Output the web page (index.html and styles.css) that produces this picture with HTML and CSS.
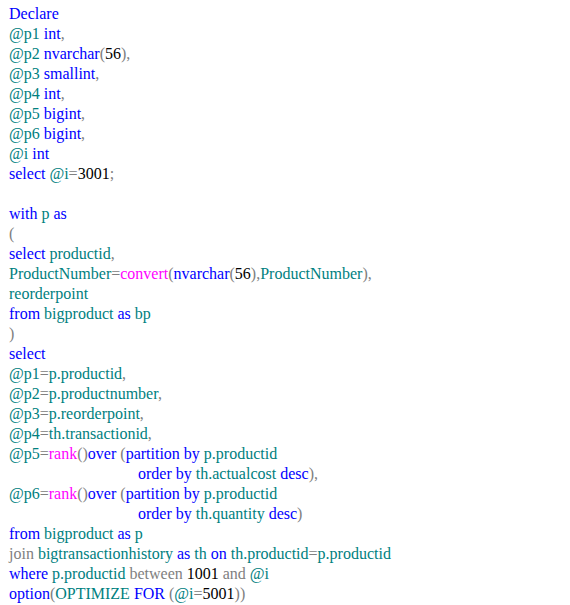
FILE: index.html
```html
<!DOCTYPE html>
<html>
<head>
<meta charset="utf-8">
<link rel="stylesheet" href="styles.css">
</head>
<body>
<div class="code">
<div class="ln"><span class="k">Declare</span></div>
<div class="ln"><span class="v">@p1</span> <span class="k">int</span><span class="g">,</span></div>
<div class="ln"><span class="v">@p2</span> <span class="k">nvarchar</span><span class="g">(</span><span class="n">56</span><span class="g">),</span></div>
<div class="ln"><span class="v">@p3</span> <span class="k">smallint</span><span class="g">,</span></div>
<div class="ln"><span class="v">@p4</span> <span class="k">int</span><span class="g">,</span></div>
<div class="ln"><span class="v">@p5</span> <span class="k">bigint</span><span class="g">,</span></div>
<div class="ln"><span class="v">@p6</span> <span class="k">bigint</span><span class="g">,</span></div>
<div class="ln"><span class="v">@i</span> <span class="k">int</span></div>
<div class="ln"><span class="k">select</span> <span class="v">@i</span><span class="g">=</span><span class="n">3001</span><span class="g">;</span></div>
<div class="ln">&nbsp;</div>
<div class="ln"><span class="k">with</span> <span class="v">p</span> <span class="k">as</span></div>
<div class="ln"><span class="g">(</span></div>
<div class="ln"><span class="k">select</span> <span class="v">productid</span><span class="g">,</span></div>
<div class="ln"><span class="v">ProductNumber</span><span class="g">=</span><span class="f">convert</span><span class="g">(</span><span class="k">nvarchar</span><span class="g">(</span><span class="n">56</span><span class="g">),</span><span class="v">ProductNumber</span><span class="g">),</span></div>
<div class="ln"><span class="v">reorderpoint</span></div>
<div class="ln"><span class="k">from</span> <span class="v">bigproduct</span> <span class="k">as</span> <span class="v">bp</span></div>
<div class="ln"><span class="g">)</span></div>
<div class="ln"><span class="k">select</span></div>
<div class="ln"><span class="v">@p1</span><span class="g">=</span><span class="v">p.productid</span><span class="g">,</span></div>
<div class="ln"><span class="v">@p2</span><span class="g">=</span><span class="v">p.productnumber</span><span class="g">,</span></div>
<div class="ln"><span class="v">@p3</span><span class="g">=</span><span class="v">p.reorderpoint</span><span class="g">,</span></div>
<div class="ln"><span class="v">@p4</span><span class="g">=</span><span class="v">th.transactionid</span><span class="g">,</span></div>
<div class="ln"><span class="v">@p5</span><span class="g">=</span><span class="f">rank</span><span class="g">()</span><span class="k">over</span> <span class="g">(</span><span class="k">partition by</span> <span class="v">p.productid</span></div>
<div class="ln ind"><span class="k">order by</span> <span class="v">th.actualcost</span> <span class="k">desc</span><span class="g">),</span></div>
<div class="ln"><span class="v">@p6</span><span class="g">=</span><span class="f">rank</span><span class="g">()</span><span class="k">over</span> <span class="g">(</span><span class="k">partition by</span> <span class="v">p.productid</span></div>
<div class="ln ind"><span class="k">order by</span> <span class="v">th.quantity</span> <span class="k">desc</span><span class="g">)</span></div>
<div class="ln"><span class="k">from</span> <span class="v">bigproduct</span> <span class="k">as</span> <span class="v">p</span></div>
<div class="ln"><span class="g">join</span> <span class="v">bigtransactionhistory</span> <span class="k">as</span> <span class="v">th</span> <span class="k">on</span> <span class="v">th.productid</span><span class="g">=</span><span class="v">p.productid</span></div>
<div class="ln"><span class="k">where</span> <span class="v">p.productid</span> <span class="g">between</span> <span class="n">1001</span> <span class="g">and</span> <span class="v">@i</span></div>
<div class="ln"><span class="k">option</span><span class="g">(</span><span class="v">OPTIMIZE</span> <span class="k">FOR</span> <span class="g">(</span><span class="v">@i</span><span class="g">=</span><span class="n">5001</span><span class="g">))</span></div>
</div>
<p class="after">In the above code, the variable @i is assigned the value 3001 at runtime, but the optimizer builds the plan for the value 5001 as specified in the hint.</p>
</body>
</html>
```
FILE: styles.css
```css
html, body {
  margin: 0;
  padding: 0;
  background: #ffffff;
}
body {
  padding: 4px 9px 0 9px;
  font-family: "Liberation Serif", "Times New Roman", serif;
  font-size: 16px;
  color: #000000;
}
.ln {
  white-space: pre;
  line-height: 20px;
  height: 20px;
}
.ind {
  padding-left: 129px;
}
.k { color: #0000ff; }
.v { color: #008080; }
.g { color: #808080; }
.f { color: #ff00ff; }
.n { color: #000000; }
.after {
  margin: 4px 0 0 0;
  line-height: 20px;
  font-size: 16px;
  color: #000000;
}
```
